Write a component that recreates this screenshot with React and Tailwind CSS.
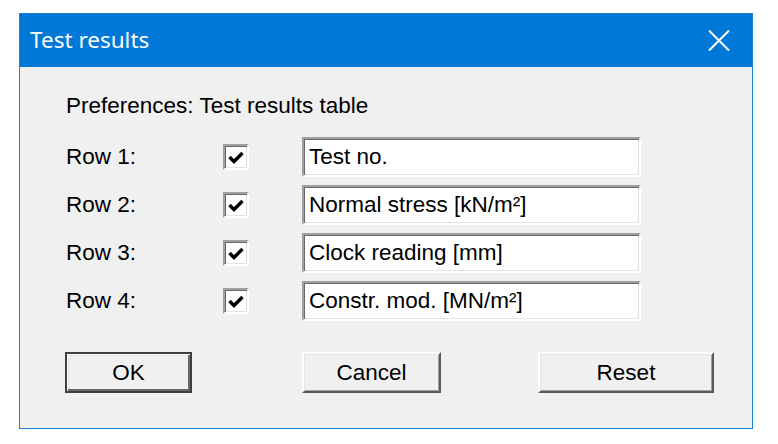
import React from "react";

const font = { fontFamily: '"Liberation Sans", Arial, sans-serif' };

function Sunken({ className = "", children }) {
  return (
    <div
      className={`bg-white border-t-2 border-l-2 border-b-2 border-r-2 border-t-[#a0a0a0] border-l-[#a0a0a0] border-b-white border-r-white shadow-[inset_1px_1px_0_#696969,inset_-1px_-1px_0_#e3e3e3] ${className}`}
    >
      {children}
    </div>
  );
}

function Check() {
  return (
    <Sunken className="w-[26px] h-[26px] flex items-center justify-center">
      <svg width="16" height="13" viewBox="0 0 16 13" className="mt-[1px]">
        <path d="M1.5 6 L6 10.5 L14.5 2" fill="none" stroke="#000" strokeWidth="3.4" />
      </svg>
    </Sunken>
  );
}

function Button({ label, w, def }) {
  return (
    <div
      className={`${w} h-[41px] flex items-center justify-center bg-[#f0f0f0] text-[22.5px] text-black border-2 ${
        def
          ? "border-[#404040] shadow-[inset_1px_1px_0_#fff,inset_-2px_-2px_0_#696969,inset_2px_2px_0_#e3e3e3]"
          : "border-t-white border-l-white border-r-[#5a5a5a] border-b-[#5a5a5a] shadow-[inset_1px_1px_0_#e3e3e3,inset_-1px_-1px_0_#a0a0a0]"
      }`}
    >
      {label}
    </div>
  );
}

const rows = [
  ["Row 1:", "Test no."],
  ["Row 2:", "Normal stress [kN/m²]"],
  ["Row 3:", "Clock reading [mm]"],
  ["Row 4:", "Constr. mod. [MN/m²]"],
];

export default function App() {
  return (
    <div className="w-[778px] h-[444px] bg-white pt-[13px] pl-[19px]" style={font}>
      <div className="w-[734px] h-[416px] border border-[#1c7fd6] bg-[#f0f0f0] flex flex-col">
        <div className="h-[53px] bg-[#0078d7] flex items-center justify-between pl-[10px] pr-[22px]">
          <span
            className="text-white text-[22.5px] leading-none"
            style={{ fontFamily: '"Noto Sans", "Open Sans", sans-serif' }}
          >
            Test results
          </span>
          <svg width="22" height="21" viewBox="0 0 22 21">
            <path d="M1 0.5 L21 20.5 M21 0.5 L1 20.5" stroke="#fff" strokeWidth="2" />
          </svg>
        </div>
        <div className="flex-1 pl-[46px] pt-[26px] flex flex-col text-[22.5px] text-black">
          <div className="leading-[26px]">Preferences: Test results table</div>
          <div className="mt-[18px] flex flex-col gap-[8px]">
            {rows.map(([l, v]) => (
              <div key={l} className="h-[40px] flex items-center">
                <div className="w-[157px] leading-[26px]">{l}</div>
                <Check />
                <Sunken className="ml-[53px] w-[339px] h-[40px] flex items-center pl-[5px] leading-[26px]">
                  {v}
                </Sunken>
              </div>
            ))}
          </div>
          <div className="mt-[31px] flex items-center -ml-[1px]">
            <Button label="OK" w="w-[127px]" def />
            <div className="ml-[110px]">
              <Button label="Cancel" w="w-[139px]" />
            </div>
            <div className="ml-[97px]">
              <Button label="Reset" w="w-[176px]" />
            </div>
          </div>
        </div>
      </div>
    </div>
  );
}
